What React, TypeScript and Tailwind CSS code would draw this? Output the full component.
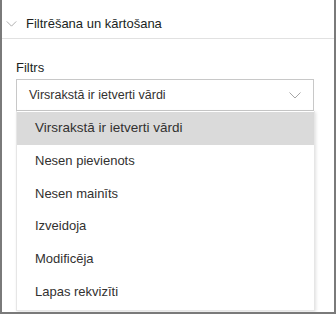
const OPTIONS = [
  "Virsrakstā ir ietverti vārdi",
  "Nesen pievienots",
  "Nesen mainīts",
  "Izveidoja",
  "Modificēja",
  "Lapas rekvizīti",
];

function Chevron({ className }: { className?: string }) {
  return (
    <svg viewBox="0 0 12 7" fill="none" stroke="currentColor" strokeWidth="1" className={className}>
      <path d="M0.5 0.5 L6 6 L11.5 0.5" />
    </svg>
  );
}

export default function App() {
  return (
    <div
      className="w-[336px] h-[314px] bg-white border-x-2 border-b-2 border-[#7a7a7a] text-[#323130] overflow-hidden"
      style={{ fontFamily: '"Liberation Sans", Arial, sans-serif' }}
    >
      {/* Section header */}
      <div className="h-[39px] flex items-center gap-[9px] pl-[4px] pt-[10px] border-b border-[#e1e1e1]">
        <Chevron className="w-[11px] h-[6px] text-[#a0a0a0]" />
        <span className="text-[13px] text-[#201f1e]">Filtrēšana un kārtošana</span>
      </div>

      <div className="pl-[14px] pr-[20px] pt-[19px]">
        <div className="text-[13px] text-[#201f1e] leading-[20px] mb-[1px]">Filtrs</div>

        {/* Dropdown */}
        <div className="h-[32px] border border-[#c8c8c8] flex items-center justify-between pl-[12px] pr-[12px]">
          <span className="text-[12.5px]">Virsrakstā ir ietverti vārdi</span>
          <Chevron className="w-[12px] h-[7px] text-[#a6a6a6]" />
        </div>

        {/* Open menu */}
        <div className="mr-[-1px] border border-t-0 border-[#e6e6e6] shadow-[1px_1px_3px_rgba(0,0,0,0.12)] bg-white pt-[1px] pb-[2px]">
          {OPTIONS.map((o, i) => (
            <div
              key={o}
              className={`h-[32.6px] flex items-center pl-[18px] ${
                i === 0 ? "bg-[#dadada] text-[13.5px]" : "text-[13px]"
              }`}
            >
              {o}
            </div>
          ))}
        </div>
      </div>
    </div>
  );
}
